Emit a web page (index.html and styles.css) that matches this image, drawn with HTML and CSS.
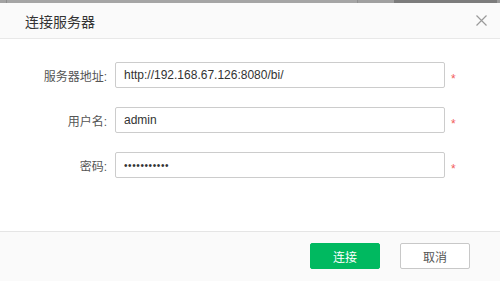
FILE: index.html
```html
<!DOCTYPE html>
<html lang="zh">
<head>
  <meta charset="UTF-8">
  <title>连接服务器</title>
  <link rel="stylesheet" href="styles.css">
</head>
<body>
  <div class="backdrop">
    <span class="seg s1"></span>
    <span class="seg s2"></span>
    <span class="seg s3"></span>
    <span class="seg s4"></span>
  </div>
  <div class="dialog">
    <div class="dialog-header">
      <span class="dialog-title">连接服务器</span>
      <span class="dialog-close">
        <svg width="11" height="11" viewBox="0 0 11 11">
          <path d="M0.5 0.5 L10.5 10.5 M10.5 0.5 L0.5 10.5" stroke="#9a9a9a" stroke-width="1.2" fill="none"/>
        </svg>
      </span>
    </div>
    <div class="dialog-body">
      <div class="form-row">
        <label class="form-label">服务器地址:</label>
        <input class="form-input" type="text" value="http://192.168.67.126:8080/bi/">
        <span class="required">*</span>
      </div>
      <div class="form-row">
        <label class="form-label">用户名:</label>
        <input class="form-input" type="text" value="admin">
        <span class="required">*</span>
      </div>
      <div class="form-row">
        <label class="form-label">密码:</label>
        <input class="form-input pwd" type="password" value="password123">
        <span class="required">*</span>
      </div>
    </div>
    <div class="dialog-footer">
      <button class="btn btn-primary">连接</button>
      <button class="btn btn-default">取消</button>
    </div>
  </div>
</body>
</html>
```

FILE: styles.css
```css
body {
  margin: 0;
  font-family: "Liberation Sans", "Noto Sans CJK SC", sans-serif;
  background-color: #fff;
}
.backdrop {
  display: flex;
  height: 3px;
  background-color: #a3a3a3;
}
.seg {
  height: 3px;
}
.s1 {
  width: 350px;
  background-color: #a5a5a5;
  border-left: 1px solid #8e8e8e;
  margin-left: 6px;
}
.s2 {
  width: 36px;
  background-color: #a0a0a0;
  border-left: 1px solid #909090;
}
.s3 {
  flex: 1;
  background-color: #7c7c7c;
}
.s4 {
  width: 3px;
  background-color: #9a9a9a;
}
.dialog {
  display: flex;
  flex-direction: column;
  height: 278px;
}
.dialog-header {
  height: 35px;
  display: flex;
  align-items: center;
  justify-content: space-between;
  padding: 0 13px 0 25px;
  background-color: #fafafa;
  border-bottom: 1px solid #e8e8e8;
}
.dialog-title {
  font-size: 14px;
  color: #333;
}
.dialog-close {
  display: flex;
  width: 11px;
  height: 11px;
}
.dialog-body {
  flex: 1;
  padding-top: 23px;
  display: flex;
  flex-direction: column;
  gap: 19px;
}
.form-row {
  display: flex;
  align-items: center;
  height: 26px;
}
.form-label {
  text-align: right;
  font-size: 12px;
  color: #555;
  padding-right: 8px;
  box-sizing: border-box;
  width: 115px;
}
.form-input {
  width: 330px;
  height: 26px;
  box-sizing: border-box;
  border: 1px solid #ccc;
  border-radius: 2px;
  padding: 0 8px;
  font-family: "Liberation Sans", sans-serif;
  font-size: 12px;
  color: #333;
  outline: none;
}
.pwd {
  font-size: 10px;
  letter-spacing: 0.6px;
}
.required {
  color: #f25c5c;
  font-size: 12px;
  margin-left: 6px;
  margin-top: 8px;
}
.dialog-footer {
  display: flex;
  justify-content: flex-end;
  align-items: flex-start;
  gap: 20px;
  padding: 11px 30px 0 0;
  box-sizing: border-box;
  background-color: #fafafa;
  border-top: 1px solid #e5e5e5;
  height: 50px;
}
.btn {
  width: 70px;
  height: 26px;
  border-radius: 2px;
  font-family: "Liberation Sans", "Noto Sans CJK SC", sans-serif;
  font-size: 12px;
  cursor: pointer;
}
.btn-primary {
  background-color: #00b960;
  border: 1px solid #00b960;
  color: #fff;
}
.btn-default {
  background-color: #fff;
  border: 1px solid #c8c8c8;
  color: #555;
}
```
